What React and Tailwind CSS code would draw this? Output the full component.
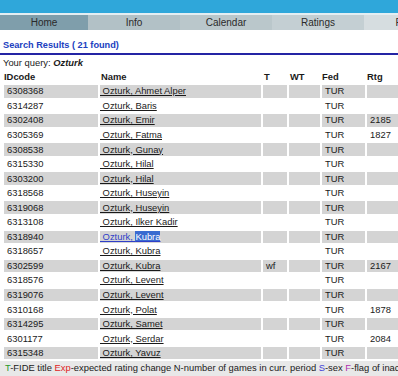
import React from "react";

const rows = [
  ["6308368", "Ahmet Alper", "", "TUR", ""],
  ["6314287", "Baris", "", "TUR", ""],
  ["6302408", "Emir", "", "TUR", "2185"],
  ["6305369", "Fatma", "", "TUR", "1827"],
  ["6308538", "Gunay", "", "TUR", ""],
  ["6315330", "Hilal", "", "TUR", ""],
  ["6303200", "Hilal", "", "TUR", ""],
  ["6318568", "Huseyin", "", "TUR", ""],
  ["6319068", "Huseyin", "", "TUR", ""],
  ["6313108", "Ilker Kadir", "", "TUR", ""],
  ["6318940", "Kubra", "", "TUR", "", true],
  ["6318657", "Kubra", "", "TUR", ""],
  ["6302599", "Kubra", "wf", "TUR", "2167"],
  ["6318576", "Levent", "", "TUR", ""],
  ["6319076", "Levent", "", "TUR", ""],
  ["6310168", "Polat", "", "TUR", "1878"],
  ["6314295", "Samet", "", "TUR", ""],
  ["6301177", "Serdar", "", "TUR", "2084"],
  ["6315348", "Yavuz", "", "TUR", ""],
];

const tabs = [
  ["Home", "w-[88px] bg-[#7f9eab]"],
  ["Info", "w-[92px] bg-[#b2c1c6]"],
  ["Calendar", "w-[92px] bg-[#bac7cb]"],
  ["Ratings", "w-[92px] bg-[#c4cfd3]"],
  ["Forum", "w-[92px] bg-[#d6dde0]"],
];

export default function App() {
  return (
    <div
      className="w-[398px] h-[376px] overflow-hidden bg-white text-[#1a1a1a]"
      style={{ fontFamily: '"Liberation Sans", Arial, sans-serif' }}
    >
      <div className="h-[13px] bg-[#2fa7da]" />
      <div className="h-[2px] bg-[#e4eef2]" />
      <div className="flex h-[15px] text-[10px] leading-[15px] text-[#2a2a2a]">
        {tabs.map(([t, c]) => (
          <div key={t} className={`${c} shrink-0 text-center`}>
            {t}
          </div>
        ))}
      </div>
      <div className="h-[9px]" />
      <div className="pl-[3px] text-[9.2px] font-bold leading-[12px] text-[#2040c0]">
        Search Results ( 21 found)
      </div>
      <div className="mt-[1.5px] h-[2px] bg-[#2424a4]" />
      <div className="mt-[2px] pl-[3px] text-[9.4px] leading-[12px]">
        Your query: <b><i>Ozturk</i></b>
      </div>
      <table
        className="ml-[2px] table-fixed border-separate border-spacing-[2px] text-[9.4px] leading-[12px] w-[417px]"
      >
        <colgroup>
          <col className="w-[94px]" />
          <col className="w-[161px]" />
          <col className="w-[24px]" />
          <col className="w-[31px]" />
          <col className="w-[43px]" />
          <col className="w-[50px]" />
        </colgroup>
        <thead>
          <tr className="h-[12.55px] font-bold text-left">
            <th className="p-0 text-left font-bold">IDcode</th>
            <th className="p-0 pl-[1px] text-left font-bold">Name</th>
            <th className="p-0 pl-[1px] text-left font-bold">T</th>
            <th className="p-0 pl-[1px] text-left font-bold">WT</th>
            <th className="p-0 text-left font-bold">Fed</th>
            <th className="p-0 text-left font-bold">Rtg</th>
          </tr>
        </thead>
        <tbody>
          {rows.map((r, i) => {
            const bg = i % 2 === 0 ? "bg-[#d4d4d4]" : "";
            return (
              <tr key={r[0] + i} className="h-[12.55px]">
                <td className={`${bg} p-0 pl-[3px] whitespace-nowrap`}>{r[0]}</td>
                <td className={`${bg} p-0 whitespace-nowrap`}>
                  {r[5] ? (
                    <span className="underline text-[#2f3fc8]">
                      {"\u00a0Ozturk, "}
                      <span className="bg-[#3a6bd0] text-white">Kubra</span>
                    </span>
                  ) : (
                    <span className="underline">{"\u00a0Ozturk, " + r[1]}</span>
                  )}
                </td>
                <td className={`${bg} p-0 pl-[3px] whitespace-nowrap`}>{r[2]}</td>
                <td className={`${bg} p-0`}></td>
                <td className={`${bg} p-0 pl-[3px] whitespace-nowrap`}>{r[3]}</td>
                <td className={`${bg} p-0 pl-[3px] whitespace-nowrap`}>{r[4]}</td>
              </tr>
            );
          })}
        </tbody>
      </table>
      <div className="bg-[#e8e8e8] h-[16px] pl-[5px] text-[9.4px] leading-[13px] whitespace-nowrap">
        <span className="text-[#2a9a2a]">T</span>-FIDE title{" "}
        <span className="text-[#e02424]">Exp</span>-expected rating change N-number of games in curr. period{" "}
        <span className="text-[#4040d8]">S</span>-sex{" "}
        <span className="text-[#b030b0]">F</span>-flag of inactivity
      </div>
    </div>
  );
}
